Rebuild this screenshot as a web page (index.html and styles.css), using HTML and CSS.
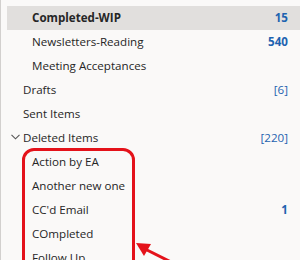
FILE: index.html
```html
<!DOCTYPE html>
<html lang="en">
<head>
    <meta charset="UTF-8">
    <title>Folder Pane</title>
    <link rel="stylesheet" href="styles.css">
</head>
<body>
    <div class="pane">
        <ul class="folders">
            <li class="folder sub selected"><span class="name">Completed-WIP</span><span class="count">15</span></li>
            <li class="folder sub"><span class="name">Newsletters-Reading</span><span class="count">540</span></li>
            <li class="folder sub"><span class="name">Meeting Acceptances</span></li>
            <li class="folder"><span class="name">Drafts</span><span class="count draft">[6]</span></li>
            <li class="folder"><span class="name">Sent Items</span></li>
            <li class="folder open"><span class="chev"><svg width="9" height="6" viewBox="0 0 9 6"><path d="M0.5 0.8 L4.5 4.8 L8.5 0.8" fill="none" stroke="#555" stroke-width="1.1"/></svg></span><span class="name">Deleted Items</span><span class="count draft">[220]</span></li>
            <li class="folder sub"><span class="name">Action by EA</span></li>
            <li class="folder sub"><span class="name">Another new one</span></li>
            <li class="folder sub"><span class="name">CC'd Email</span><span class="count">1</span></li>
            <li class="folder sub"><span class="name">COmpleted</span></li>
            <li class="folder sub"><span class="name">Follow Up</span></li>
        </ul>

        <!-- annotation -->
        <div class="callout"></div>
        <svg class="arrow" width="60" height="40" viewBox="0 0 60 40">
            <path d="M50 34 L10 14" stroke="#e4121a" stroke-width="3" fill="none"/>
            <path d="M3 9 L18 10 L11 22 Z" fill="#e4121a"/>
        </svg>
    </div>
</body>
</html>
```

FILE: styles.css
```css
body {
    margin: 0;
    font-family: "Open Sans", "Noto Sans", sans-serif;
    background-color: #faf9f8;
}
.pane {
    position: relative;
    width: 300px;
    height: 260px;
    overflow: hidden;
    border-left: 1px solid #d2d0ce;
    box-sizing: border-box;
    padding-top: 6px;
}
.folders {
    list-style: none;
    margin: 0;
    padding: 0 0 0 6px;
}
.folder {
    display: flex;
    align-items: center;
    height: 24px;
    padding: 0 12px 2px 16px;
    box-sizing: border-box;
    font-size: 11.6px;
    color: #262626;
}
.folder.sub {
    padding-left: 25px;
}
.folder.open {
    padding-left: 4px;
}
.chev {
    display: inline-flex;
    width: 12px;
}
.folder.selected {
    background-color: #e1dfdd;
    font-weight: bold;
}
.name {
    flex: 1;
}
.count {
    color: #1e63b0;
    font-weight: bold;
}
.count.draft {
    font-weight: normal;
}
.callout {
    position: absolute;
    left: 21px;
    top: 148px;
    width: 107px;
    height: 130px;
    border: 3px solid #e4121a;
    border-radius: 12px;
}
.arrow {
    position: absolute;
    left: 132px;
    top: 234px;
}
```
